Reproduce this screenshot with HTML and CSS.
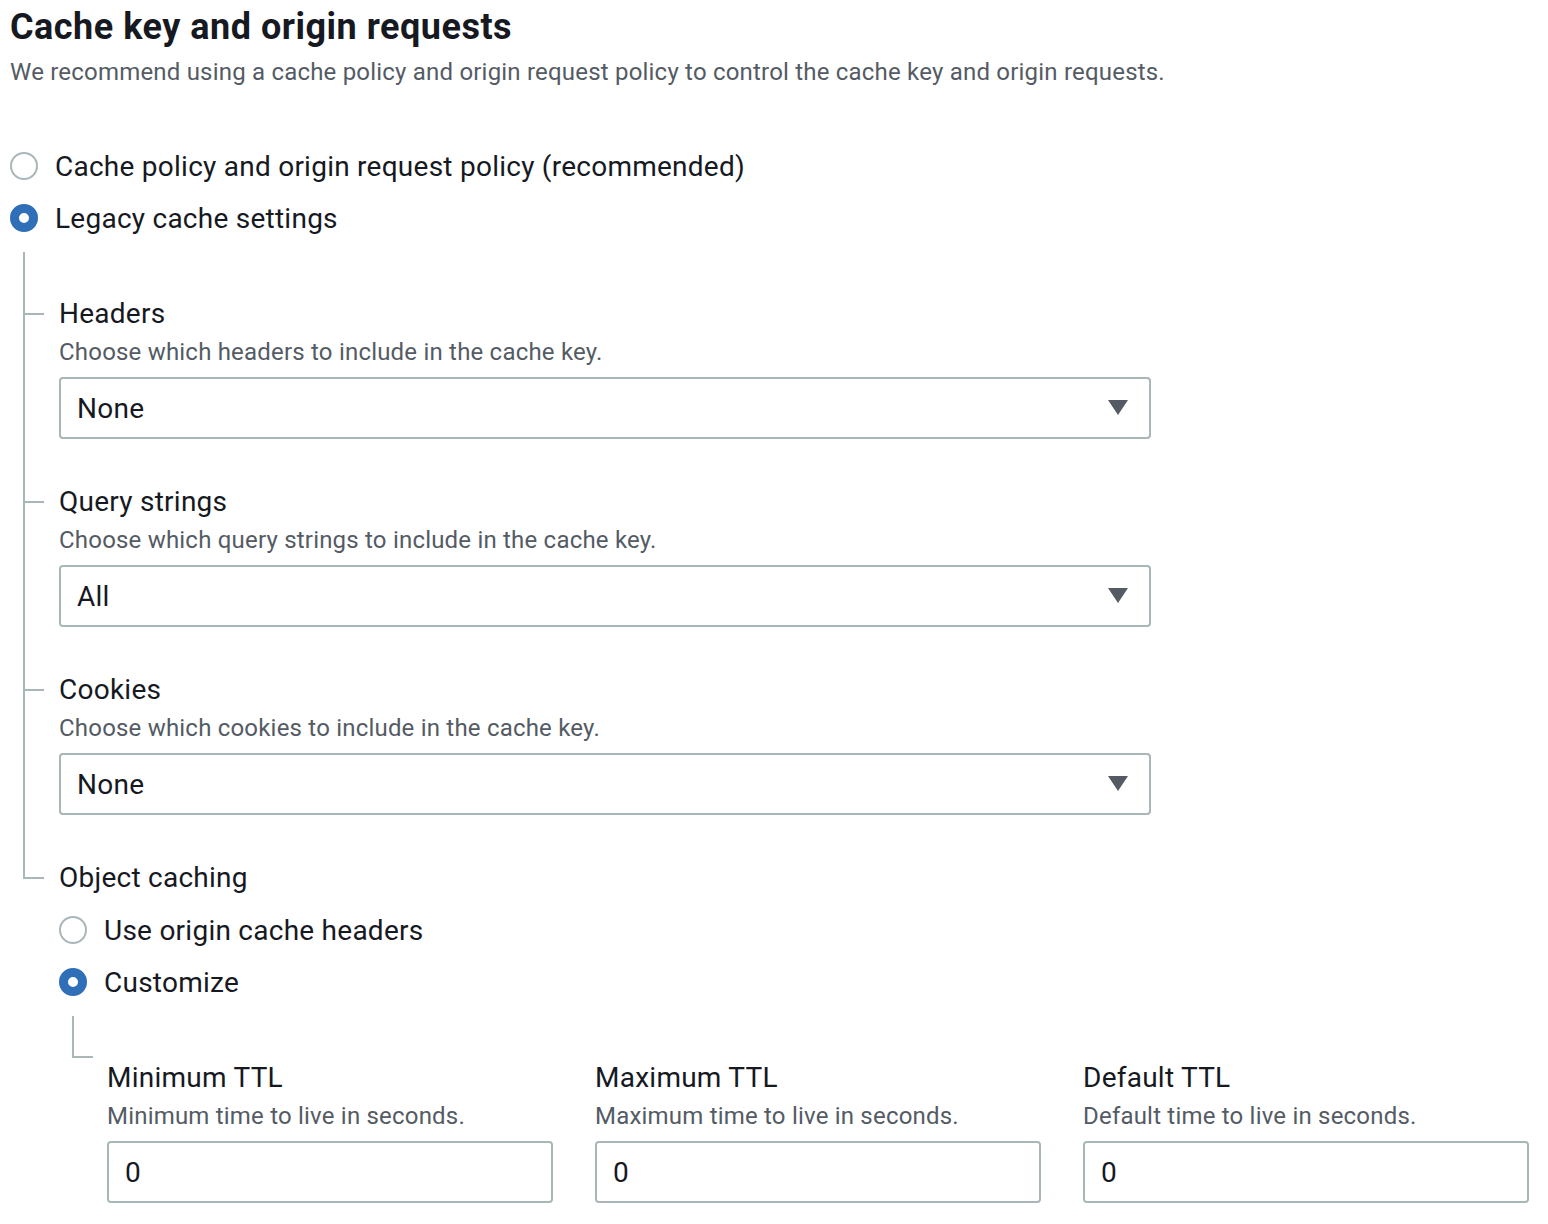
FILE: index.html
```html
<!DOCTYPE html>
<html lang="en">
<head>
  <meta charset="UTF-8" />
  <meta name="viewport" content="width=device-width, initial-scale=1.0"/>
  <title>Cache key and origin requests</title>
  <link rel="stylesheet" href="styles.css">
</head>
<body>

  <div class="panel">
    <h2>Cache key and origin requests</h2>
    <p class="intro">We recommend using a cache policy and origin request policy to control the cache key and origin requests.</p>

    <div class="radio-group top-radios">
      <label class="radio"><span class="dot"></span>Cache policy and origin request policy (recommended)</label>
      <label class="radio"><span class="dot checked"></span>Legacy cache settings</label>
    </div>

    <div class="tree">
      <div class="tree-lines">
        <div class="field branch">
          <div class="field-label">Headers</div>
          <div class="field-desc">Choose which headers to include in the cache key.</div>
          <div class="select">None<span class="caret"></span></div>
        </div>

        <div class="field branch">
          <div class="field-label">Query strings</div>
          <div class="field-desc">Choose which query strings to include in the cache key.</div>
          <div class="select">All<span class="caret"></span></div>
        </div>

        <div class="field branch">
          <div class="field-label">Cookies</div>
          <div class="field-desc">Choose which cookies to include in the cache key.</div>
          <div class="select">None<span class="caret"></span></div>
        </div>
      </div>

      <div class="field last-branch">
        <div class="field-label">Object caching</div>
        <div class="radio-group">
          <label class="radio"><span class="dot"></span>Use origin cache headers</label>
          <label class="radio"><span class="dot checked"></span>Customize</label>
        </div>

        <div class="sub-corner"></div>

        <div class="ttl-grid">
          <div class="ttl">
            <div class="field-label">Minimum TTL</div>
            <div class="field-desc">Minimum time to live in seconds.</div>
            <input type="text" value="0">
          </div>
          <div class="ttl">
            <div class="field-label">Maximum TTL</div>
            <div class="field-desc">Maximum time to live in seconds.</div>
            <input type="text" value="0">
          </div>
          <div class="ttl">
            <div class="field-label">Default TTL</div>
            <div class="field-desc">Default time to live in seconds.</div>
            <input type="text" value="0">
          </div>
        </div>
      </div>
    </div>
  </div>

</body>
</html>
```
FILE: styles.css
```css
body {
  margin: 0;
  background: #fff;
  font-family: Roboto, "Liberation Sans", sans-serif;
  color: #16191f;
}

.panel {
  padding: 4px 19px 0 10px;
}

h2 {
  margin: 0;
  font-size: 36px;
  line-height: 46px;
  font-weight: bold;
  letter-spacing: 0.5px;
}

.intro {
  margin: 6px 0 0;
  font-size: 24px;
  line-height: 32px;
  color: #545b64;
  letter-spacing: 0.2px;
}

.radio-group {
  display: flex;
  flex-direction: column;
}

.top-radios {
  margin-top: 52px;
}

.radio {
  display: flex;
  align-items: center;
  height: 52px;
  font-size: 28px;
  letter-spacing: 0.25px;
  gap: 17px;
}

.dot {
  width: 28px;
  height: 28px;
  box-sizing: border-box;
  border: 2px solid #aab7b8;
  border-radius: 50%;
  flex-shrink: 0;
}

.dot.checked {
  border: 9px solid #2e6fb7;
  background: #fff;
}

/* tree of legacy settings */
.tree {
  margin-top: 8px;
  margin-left: 13px;
}

.tree-lines {
  border-left: 2px solid #aab7b8;
  padding-top: 42px;
}

.field {
  position: relative;
  padding-left: 34px;
}

.branch {
  padding-bottom: 43px;
}

.branch::before {
  content: "";
  position: absolute;
  left: 0;
  top: 19px;
  width: 19px;
  height: 2px;
  background: #aab7b8;
}

.last-branch {
  padding-left: 36px;
}

.last-branch::before {
  content: "";
  position: absolute;
  left: 0;
  top: 0;
  width: 19px;
  height: 19px;
  border-left: 2px solid #aab7b8;
  border-bottom: 2px solid #aab7b8;
}

.field-label {
  font-size: 28px;
  line-height: 40px;
  letter-spacing: 0.25px;
}

.field-desc {
  margin-top: 2px;
  font-size: 24px;
  line-height: 32px;
  color: #545b64;
  letter-spacing: 0.2px;
}

.select {
  position: relative;
  margin-top: 9px;
  width: 1092px;
  height: 62px;
  box-sizing: border-box;
  border: 2px solid #aab7b8;
  border-radius: 4px;
  padding-left: 16px;
  display: flex;
  align-items: center;
  font-size: 28px;
  letter-spacing: 0.25px;
}

.caret {
  position: absolute;
  right: 21px;
  top: 21px;
  width: 0;
  height: 0;
  border-left: 10px solid transparent;
  border-right: 10px solid transparent;
  border-top: 15px solid #545b64;
}

.field .radio-group {
  margin-top: 6px;
}

.sub-corner {
  margin: 8px 0 0 13px;
  width: 19px;
  height: 40px;
  border-left: 2px solid #aab7b8;
  border-bottom: 2px solid #aab7b8;
}

.ttl-grid {
  display: grid;
  grid-template-columns: repeat(3, 446px);
  column-gap: 42px;
  margin-left: 48px;
}

.ttl input {
  margin-top: 9px;
  width: 100%;
  height: 62px;
  box-sizing: border-box;
  border: 2px solid #aab7b8;
  border-radius: 4px;
  padding: 0 16px;
  font-family: inherit;
  font-size: 28px;
  color: #16191f;
}
```
